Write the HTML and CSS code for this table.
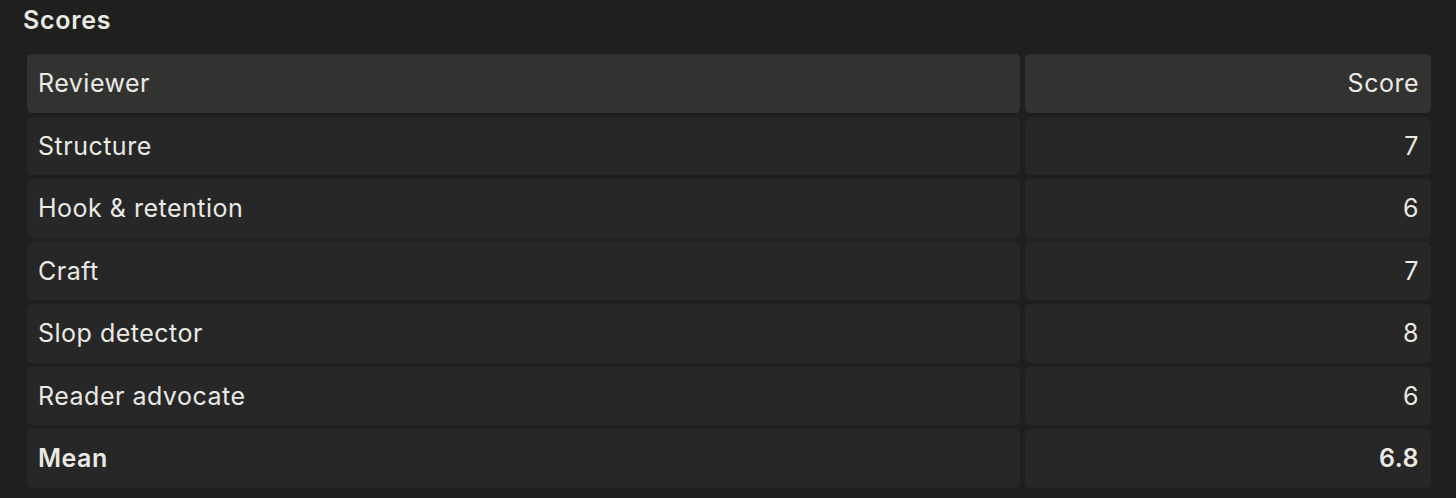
FILE: index.html
```html
<!DOCTYPE html>
<html lang="en">
  <head>
    <meta charset="UTF-8" />
    <title>Scores</title>
    <link rel="stylesheet" href="styles.css">
  </head>
  <body>
    <div class="scores">
      <h3>Scores</h3>
      <div class="tabela">
        <div class="cel cab">Reviewer</div>
        <div class="cel cab num">Score</div>

        <div class="cel">Structure</div>
        <div class="cel num">7</div>

        <div class="cel">Hook &amp; retention</div>
        <div class="cel num">6</div>

        <div class="cel">Craft</div>
        <div class="cel num">7</div>

        <div class="cel">Slop detector</div>
        <div class="cel num">8</div>

        <div class="cel">Reader advocate</div>
        <div class="cel num">6</div>

        <div class="cel forte">Mean</div>
        <div class="cel num forte">6.8</div>
      </div>
    </div>
  </body>
</html>
```

FILE: styles.css
```css
* {
  margin: 0;
  padding: 0;
  box-sizing: border-box;
  font-family: Inter, "Noto Sans", sans-serif;
}

body {
  background-color: #1f1f1e;
  color: #ebe9e3;
  font-size: 25px;
  letter-spacing: 0.5px;
}

.scores {
  padding: 4px 25px 0 23px;
}

h3 {
  font-size: 25px;
  font-weight: 600;
  line-height: 33px;
  margin-bottom: 17px;
  letter-spacing: 0.7px;
}

.tabela {
  display: grid;
  grid-template-columns: 993px 406px;
  grid-auto-rows: 58.5px;
  gap: 4px 5px;
  margin-left: 4px;
}

.cel {
  background: #272727;
  border-radius: 5px;
  padding: 0 11px;
  display: flex;
  align-items: center;
}

.cel.cab {
  background: #323231;
}

.num {
  justify-content: flex-end;
  padding-right: 12px;
}

.forte {
  font-weight: 600;
}
```
